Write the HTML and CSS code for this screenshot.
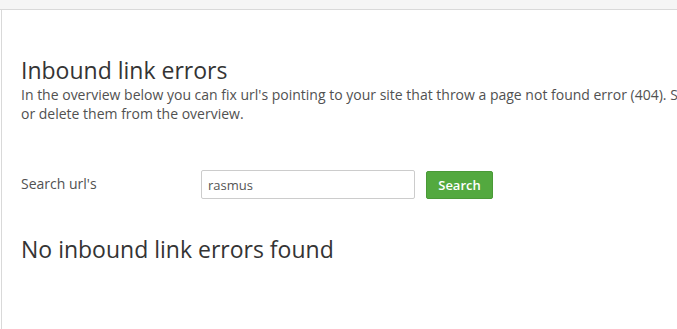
FILE: index.html
```html
<!doctype html>
<html lang="en">
  <head>
    <meta charset="utf-8" />
    <title>Inbound link errors</title>
    <link rel="stylesheet" href="styles.css">
  </head>
  <body>
    <div class="topbar"></div>
    <div class="panel">
      <div class="content">
        <h1>Inbound link errors</h1>
        <p class="intro">
          In the overview below you can fix url's pointing to your site that throw a page not found error (404). Select a new url for them<br />
          or delete them from the overview.
        </p>

        <form class="search">
          <label for="searchUrl">Search url's</label>
          <input id="searchUrl" type="text" value="rasmus" />
          <button type="button" class="btn-success">Search</button>
        </form>

        <h2>No inbound link errors found</h2>
      </div>
    </div>
  </body>
</html>
```

FILE: styles.css
```css
html,
body {
  margin: 0;
  padding: 0;
  height: 100%;
  overflow: hidden;
}

body {
  font-family: 'Open Sans', 'Noto Sans', sans-serif;
  background-color: #ffffff;
  color: #343434;
}

.topbar {
  height: 9px;
  background-color: #f5f5f5;
  border-bottom: 1px solid #d9d9d9;
}

.panel {
  margin-left: 1px;
  border-left: 1px solid #d9d9d9;
  height: 100%;
}

.content {
  width: 1000px;
  padding: 46px 19px 0;
}

h1 {
  font-size: 23px;
  font-weight: 400;
  line-height: 28px;
  margin: 0 0 1px;
  color: #343434;
}

.intro {
  font-size: 14px;
  line-height: 19px;
  color: #515151;
  margin: 0;
}

.search {
  display: flex;
  align-items: center;
  margin-top: 47px;
}

.search label {
  width: 180px;
  font-size: 14px;
  color: #515151;
  margin-top: -2px;
}

.search input {
  width: 214px;
  height: 29px;
  box-sizing: border-box;
  padding: 4px 6px;
  border: 1px solid #cccccc;
  border-radius: 2px;
  font-family: inherit;
  font-size: 13px;
  color: #555555;
}

.btn-success {
  margin-left: 11px;
  height: 28px;
  width: 67px;
  padding: 0;
  border: 1px solid #4a9a37;
  border-radius: 2px;
  background-color: #53a93f;
  color: #ffffff;
  font-family: inherit;
  font-size: 13px;
  font-weight: 600;
}

h2 {
  font-size: 23px;
  font-weight: 400;
  line-height: 28px;
  margin: 36px 0 0;
  color: #343434;
}
```
